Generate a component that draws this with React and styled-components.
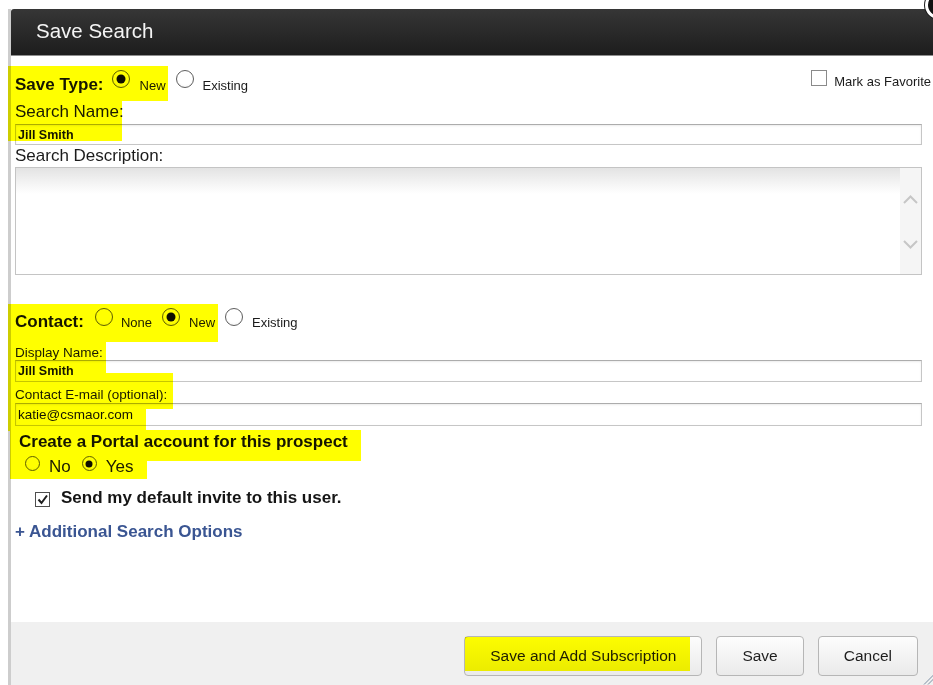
import styled, { createGlobalStyle } from "styled-components";

const GlobalStyle = createGlobalStyle`
  html, body {
    margin: 0;
    padding: 0;
    background: #fff;
    overflow: hidden;
  }
  body {
    font-family: "Liberation Sans", Arial, sans-serif;
    color: #1b1b1b;
  }
`;

// freehand highlighter strokes laid over the form (dialog-relative px)
const highlights = [
  { x: -3, y: 57, w: 160, h: 35 },
  { x: -3, y: 92, w: 114, h: 40 },
  { x: -3, y: 295, w: 210, h: 38 },
  { x: -3, y: 333, w: 98, h: 31 },
  { x: -3, y: 364, w: 165, h: 36 },
  { x: -3, y: 400, w: 138, h: 22 },
  { x: -1, y: 421, w: 351, h: 31 },
  { x: -1, y: 452, w: 137, h: 18 },
  { x: 454, y: 628, w: 225, h: 34 },
];

const App = () => {
  return (
    <>
      <GlobalStyle />
      <Dialog>
        <Header>
          <Title>Save Search</Title>
          <CloseButton />
        </Header>

        <Body>
          <TopRow>
            <Line>
              <BoldLabel>Save Type:</BoldLabel>
              <Radio $checked $ml={8} $lift={2} />
              <Option $ml={10}>New</Option>
              <Radio $ml={10} $lift={2} />
              <Option $ml={9}>Existing</Option>
            </Line>
            <FavoriteLine>
              <Box />
              <Option $ml={7}>Mark as Favorite</Option>
            </FavoriteLine>
          </TopRow>

          <FieldLabel $mt={6}>Search Name:</FieldLabel>
          <TextInput $mt={2} $h={21} readOnly value="Jill Smith" />

          <FieldLabel $mt={1}>Search Description:</FieldLabel>
          <TextArea>
            <TextAreaFill />
            <Scroller>
              <svg width="15" height="9" viewBox="0 0 15 9">
                <polyline points="1,8 7.5,1.5 14,8" fill="none" stroke="#c6c6c6" strokeWidth="2" />
              </svg>
              <svg width="15" height="9" viewBox="0 0 15 9">
                <polyline points="1,1 7.5,7.5 14,1" fill="none" stroke="#c6c6c6" strokeWidth="2" />
              </svg>
            </Scroller>
          </TextArea>

          <Line $mt={33}>
            <BoldLabel>Contact:</BoldLabel>
            <Radio $ml={11} $lift={1} />
            <Option $ml={8}>None</Option>
            <Radio $checked $ml={10} $lift={1} />
            <Option $ml={9}>New</Option>
            <Radio $ml={10} $lift={1} />
            <Option $ml={9}>Existing</Option>
          </Line>

          <SmallLabel $mt={12}>Display Name:</SmallLabel>
          <TextInput $mt={0} $h={22} readOnly value="Jill Smith" />
          <SmallLabel $mt={5}>Contact E-mail (optional):</SmallLabel>
          <TextInput $mt={1} $h={23} $plain readOnly value="katie@csmaor.com" />

          <Line $mt={6} $pl={4}>
            <BoldLabel>Create a Portal account for this prospect</BoldLabel>
          </Line>
          <Line $mt={4} $pl={10}>
            <Radio $size={15} $lift={1} />
            <Option $ml={9} $size={17}>No</Option>
            <Radio $checked $size={15} $ml={11} $lift={1} />
            <Option $ml={9} $size={17}>Yes</Option>
          </Line>
          <Line $mt={11} $pl={20}>
            <CheckBox>
              <svg width="13" height="13" viewBox="0 0 13 13">
                <polyline points="2.5,6.5 5.5,10 11,2.5" fill="none" stroke="#1e1e1e" strokeWidth="2" />
              </svg>
            </CheckBox>
            <BoldLabel>Send my default invite to this user.</BoldLabel>
          </Line>
          <Line $mt={14}>
            <MoreLink>+ Additional Search Options</MoreLink>
          </Line>
        </Body>

        <Footer>
          <Button>Save and Add Subscription</Button>
          <Button>Save</Button>
          <Button>Cancel</Button>
        </Footer>

        <Grip width="12" height="12" viewBox="0 0 12 12">
          <line x1="11.5" y1="2" x2="2" y2="11.5" stroke="#7d8ea4" strokeWidth="1" />
          <line x1="11.5" y1="6" x2="6" y2="11.5" stroke="#7d8ea4" strokeWidth="1" />
        </Grip>

        {highlights.map((m, i) => (
          <Marker key={i} $x={m.x} $y={m.y} $w={m.w} $h={m.h} />
        ))}
      </Dialog>
    </>
  );
};

const Dialog = styled.div`
  position: relative;
  width: 924px;
  margin: 9px 0 0 8px;
  border-left: 3px solid #cdcdcd;
  background: #fff;
`;

const Header = styled.div`
  position: relative;
  box-sizing: border-box;
  height: 47px;
  padding: 10px 0 0 25px;
  background: linear-gradient(#363636, #1d1d1d);
  border-bottom: 1px solid #8e8e8e;
  border-top-left-radius: 3px;
`;

const Title = styled.div`
  font-size: 20.5px;
  line-height: 24px;
  color: #f4f4f4;
`;

const CloseButton = styled.div`
  position: absolute;
  right: -18px;
  top: -18px;
  width: 28px;
  height: 28px;
  box-sizing: border-box;
  border-radius: 50%;
  background: #111;
  border: 3px solid #fff;
  box-shadow: 0 0 0 1px #1a1a1a;
`;

const Body = styled.div`
  box-sizing: border-box;
  height: 566px;
  padding: 14px 13px 0 4px;
`;

const TopRow = styled.div`
  display: flex;
  justify-content: space-between;
  align-items: flex-start;
`;

const Line = styled.div`
  margin-top: ${(p) => p.$mt || 0}px;
  padding-left: ${(p) => p.$pl || 0}px;
  font-size: 17px;
  line-height: 20px;
  white-space: nowrap;
`;

const FavoriteLine = styled.div`
  margin-right: -9px;
  font-size: 13px;
  line-height: 20px;
  white-space: nowrap;
`;

const BoldLabel = styled.span`
  font-weight: bold;
  font-size: 17px;
  color: #151515;
`;

const Option = styled.span`
  margin-left: ${(p) => p.$ml || 0}px;
  font-size: ${(p) => p.$size || 13}px;
  color: #1b1b1b;
`;

const Radio = styled.span`
  position: relative;
  display: inline-block;
  box-sizing: border-box;
  width: ${(p) => p.$size || 18}px;
  height: ${(p) => p.$size || 18}px;
  margin-left: ${(p) => p.$ml || 0}px;
  vertical-align: ${(p) => p.$lift || 0}px;
  border: 1px solid #5e5e5e;
  border-radius: 50%;
  background: radial-gradient(circle at 50% 40%, #fff 55%, #ececec);

  &::after {
    content: "";
    display: ${(p) => (p.$checked ? "block" : "none")};
    position: absolute;
    left: 50%;
    top: 50%;
    width: ${(p) => ((p.$size || 18) > 16 ? 9 : 7)}px;
    height: ${(p) => ((p.$size || 18) > 16 ? 9 : 7)}px;
    transform: translate(-50%, -50%);
    border-radius: 50%;
    background: #0e0e0e;
  }
`;

const Box = styled.span`
  display: inline-block;
  box-sizing: border-box;
  width: 16px;
  height: 16px;
  vertical-align: 0;
  border: 1px solid #8a8a8a;
  background: #fff;
`;

const CheckBox = styled.span`
  display: inline-flex;
  align-items: center;
  justify-content: center;
  box-sizing: border-box;
  width: 15px;
  height: 15px;
  margin-right: 11px;
  vertical-align: -3px;
  border: 1px solid #4e4e4e;
  background: #fff;
`;

const FieldLabel = styled.div`
  margin-top: ${(p) => p.$mt}px;
  font-size: 17px;
  line-height: 20px;
  color: #1b1b1b;
`;

const SmallLabel = styled.div`
  margin-top: ${(p) => p.$mt}px;
  font-size: 13.5px;
  line-height: 15px;
  color: #1b1b1b;
`;

const TextInput = styled.input`
  display: block;
  box-sizing: border-box;
  width: 100%;
  height: ${(p) => p.$h}px;
  margin: ${(p) => p.$mt}px 0 0;
  padding: 0 2px;
  border: 1px solid #c6c6c6;
  border-top-color: #acacac;
  box-shadow: inset 0 1px 2px rgba(0, 0, 0, 0.08);
  background: #fff;
  font-family: "Liberation Sans", Arial, sans-serif;
  font-size: ${(p) => (p.$plain ? 13.5 : 12.5)}px;
  font-weight: ${(p) => (p.$plain ? "normal" : "bold")};
  color: #141414;
  outline: none;
`;

const TextArea = styled.div`
  display: flex;
  box-sizing: border-box;
  height: 108px;
  margin-top: 1px;
  border: 1px solid #c4c4c4;
`;

const TextAreaFill = styled.div`
  flex: 1;
  background: linear-gradient(#e3e3e3 0, #f7f7f7 18px, #fff 26px);
`;

const Scroller = styled.div`
  display: flex;
  flex-direction: column;
  align-items: center;
  gap: 36px;
  width: 21px;
  padding-top: 27px;
  background: #f5f5f5;
`;

const MoreLink = styled.span`
  font-weight: bold;
  font-size: 17px;
  color: #3a5592;
  cursor: pointer;
`;

const Footer = styled.div`
  display: flex;
  justify-content: flex-end;
  align-items: flex-start;
  gap: 14px;
  box-sizing: border-box;
  height: 64px;
  padding: 14px 17px 0 0;
  background: #f0f0f0;
`;

const Button = styled.button`
  height: 40px;
  padding: 0 25px;
  border: 1px solid #b6b6b6;
  border-radius: 4px;
  background: linear-gradient(#fdfdfd, #eaeaea);
  font-family: "Liberation Sans", Arial, sans-serif;
  font-size: 15.5px;
  color: #1e1e1e;
  cursor: pointer;
`;

const Grip = styled.svg`
  position: absolute;
  right: 1px;
  bottom: 1px;
`;

const Marker = styled.div`
  position: absolute;
  left: ${(p) => p.$x}px;
  top: ${(p) => p.$y}px;
  width: ${(p) => p.$w}px;
  height: ${(p) => p.$h}px;
  background: #ffff00;
  mix-blend-mode: multiply;
  pointer-events: none;
`;

export default App;
